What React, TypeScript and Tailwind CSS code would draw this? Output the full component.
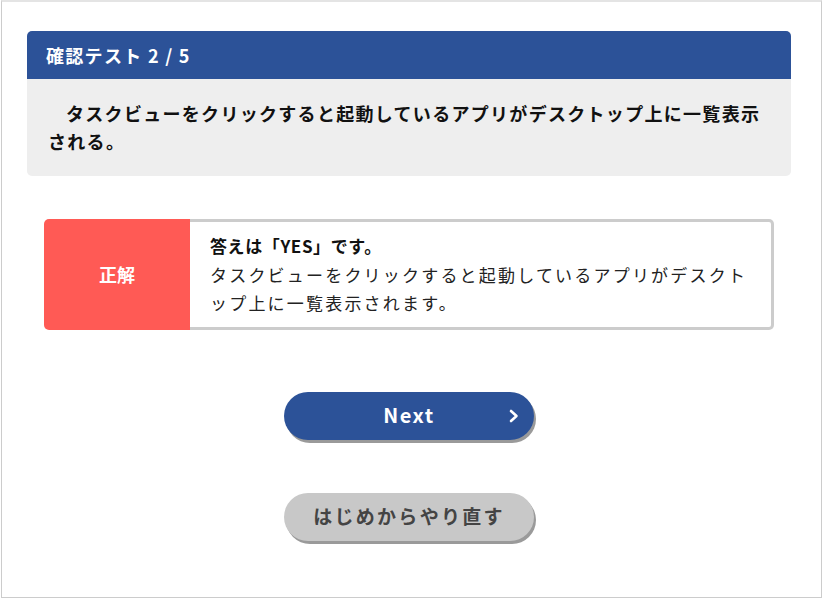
import React from "react";

const jp = { fontFamily: '"Noto Sans CJK JP", "Noto Sans", sans-serif' };

export default function App() {
  return (
    <div className="w-[823px] h-[599px] bg-white pl-px" style={jp}>
      <div className="w-[821px] h-[598px] border border-[#cccccc] border-t-2 border-t-[#e4e4e4] bg-white">
        <div className="ml-[25px] mt-[29px] w-[764px] flex flex-col items-center">
          <div className="w-full rounded-[5px] overflow-hidden">
            <div className="h-[48px] bg-[#2c5298] flex items-center px-[19px] text-white font-bold text-[18px] tracking-[1.3px]">
              確認テスト 2 / 5
            </div>
            <div className="bg-[#eeeeee] px-[21px] pt-[20px] pb-[21px] text-[18px] font-bold leading-[28px] tracking-[1.3px] text-[#111] indent-[1em]">
              タスクビューをクリックすると起動しているアプリがデスクトップ上に一覧表示される。
            </div>
          </div>

          <div className="mt-[43px] w-[730px] h-[111px] flex">
            <div className="w-[146px] bg-[#ff5a55] rounded-l-[5px] flex items-center justify-center text-white font-bold text-[18px]">
              正解
            </div>
            <div className="flex-1 border-y-[3px] border-r-[3px] border-[#cccccc] rounded-r-[5px] pl-[20px] pr-[20px] pt-[10px] text-[17px] leading-[28.5px] text-[#222] tracking-[2.2px]">
              <div className="font-bold tracking-[0.6px] text-[#111]">答えは「YES」です。</div>
              <div>タスクビューをクリックすると起動しているアプリがデスクトップ上に一覧表示されます。</div>
            </div>
          </div>

          <button className="mt-[62px] relative w-[250px] h-[48px] rounded-full bg-[#2c5298] shadow-[2px_3px_0_#9a9a9a] text-white font-bold text-[20px] tracking-[1.5px] flex items-center justify-center pb-[2px]">
            Next
            <svg className="absolute right-[14px] top-1/2 -translate-y-1/2" width="12" height="14" viewBox="0 0 12 14">
              <path d="M3 2 L8.5 7 L3 12" fill="none" stroke="white" strokeWidth="2.6" strokeLinecap="round" strokeLinejoin="round" />
            </svg>
          </button>

          <button className="mt-[53px] w-[250px] h-[48px] rounded-full bg-[#c8c8c8] shadow-[2px_3px_0_#9a9a9a] text-[#444] font-bold text-[19px] tracking-[2.3px] flex items-center justify-center pb-[1px]">
            はじめからやり直す
          </button>
        </div>
      </div>
    </div>
  );
}
